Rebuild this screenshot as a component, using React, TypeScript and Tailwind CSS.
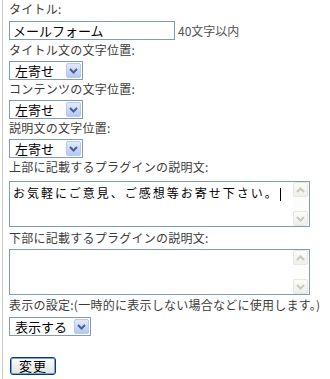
import React from "react";

function Chevron() {
  return (
    <svg width="9" height="6" viewBox="0 0 9 6">
      <path d="M1 1 L4.5 4.5 L8 1" fill="none" stroke="#4d6185" strokeWidth="2" />
    </svg>
  );
}

function Select({ value, width }: { value: string; width: string }) {
  return (
    <div className={`${width} h-[19px] border border-[#7f9db9] bg-white flex items-center`}>
      <span className="flex-1 pl-[5px] text-[13px] leading-[17px] text-black">{value}</span>
      <span className="w-[15px] h-[15px] mr-[1px] rounded-[2px] border border-[#b9c9ef] bg-gradient-to-b from-[#e1eafe] to-[#b4c8f6] flex items-center justify-center">
        <Chevron />
      </span>
    </div>
  );
}

function Arrow({ up }: { up: boolean }) {
  return (
    <svg width="9" height="6" viewBox="0 0 9 6">
      <path
        d={up ? "M1 5 L4.5 1.5 L8 5" : "M1 1 L4.5 4.5 L8 1"}
        fill="none"
        stroke="#c9c9c1"
        strokeWidth="2"
      />
    </svg>
  );
}

function ScrollBtn({ up }: { up: boolean }) {
  return (
    <div className="w-[15px] h-[15px] rounded-[2px] border border-[#e6e6de] bg-gradient-to-b from-[#fbfbf8] to-[#f0f0ea] flex items-center justify-center">
      <Arrow up={up} />
    </div>
  );
}

function TextArea({ text }: { text?: string }) {
  return (
    <div className="w-[301px] h-[46px] border border-[#7f9db9] bg-white flex">
      <div className="flex-1 pl-[3px] pt-[3px] text-[12px] leading-[16px] tracking-[2px] text-black whitespace-nowrap">
        {text ? (
          <span>
            {text}
            <span className="inline-block w-px h-[13px] bg-black align-middle ml-[1px]" />
          </span>
        ) : null}
      </div>
      <div className="w-[16px] bg-[#fcfcfa] flex flex-col justify-between">
        <ScrollBtn up={true} />
        <ScrollBtn up={false} />
      </div>
    </div>
  );
}

function Label({ children, className = "" }: { children: React.ReactNode; className?: string }) {
  return <div className={`h-[18px] leading-[18px] text-[12px] text-[#3c3c3c] tracking-[0.25px] whitespace-nowrap ${className}`}>{children}</div>;
}

export default function App() {
  return (
    <div className="w-[330px] h-[379px] bg-white overflow-hidden font-['Noto_Sans_CJK_JP','Noto_Sans',sans-serif]">
      <div className="ml-[2px] h-full border-l border-[#cccccc] pl-[6px] flex flex-col items-start">
        <Label>タイトル:</Label>
        <div className="mt-[3px] flex items-center">
          <div className="w-[166px] h-[19px] border border-[#7f9db9] bg-white pl-[3px] text-[13px] leading-[17px] text-black">
            メールフォーム
          </div>
          <span className="ml-[3px] text-[12px] text-[#505050]">40文字以内</span>
        </div>
        <Label className="mt-[1px]">タイトル文の文字位置:</Label>
        <div className="mt-[2px]"><Select value="左寄せ" width="w-[74px]" /></div>
        <Label>コンテンツの文字位置:</Label>
        <div className="mt-[2px]"><Select value="左寄せ" width="w-[74px]" /></div>
        <Label>説明文の文字位置:</Label>
        <div className="mt-[2px]"><Select value="左寄せ" width="w-[74px]" /></div>
        <Label>上部に記載するプラグインの説明文:</Label>
        <div className="mt-[5px]"><TextArea text="お気軽にご意見、ご感想等お寄せ下さい。" /></div>
        <Label className="mt-[2px]">下部に記載するプラグインの説明文:</Label>
        <div className="mt-[2px]"><TextArea /></div>
        <Label className="mt-[1px]">表示の設定:(一時的に表示しない場合などに使用します。)</Label>
        <div className="mt-[3px]"><Select value="表示する" width="w-[82px]" /></div>
        <button className="mt-[21px] ml-[1px] h-[18px] px-[8px] rounded-[3px] border border-[#003c74] bg-gradient-to-b from-white to-[#e3e3db] text-[13px] leading-[14px] tracking-[1px] text-black shadow-[inset_0_0_0_1px_#7fa1d8]">
          変更
        </button>
      </div>
    </div>
  );
}
